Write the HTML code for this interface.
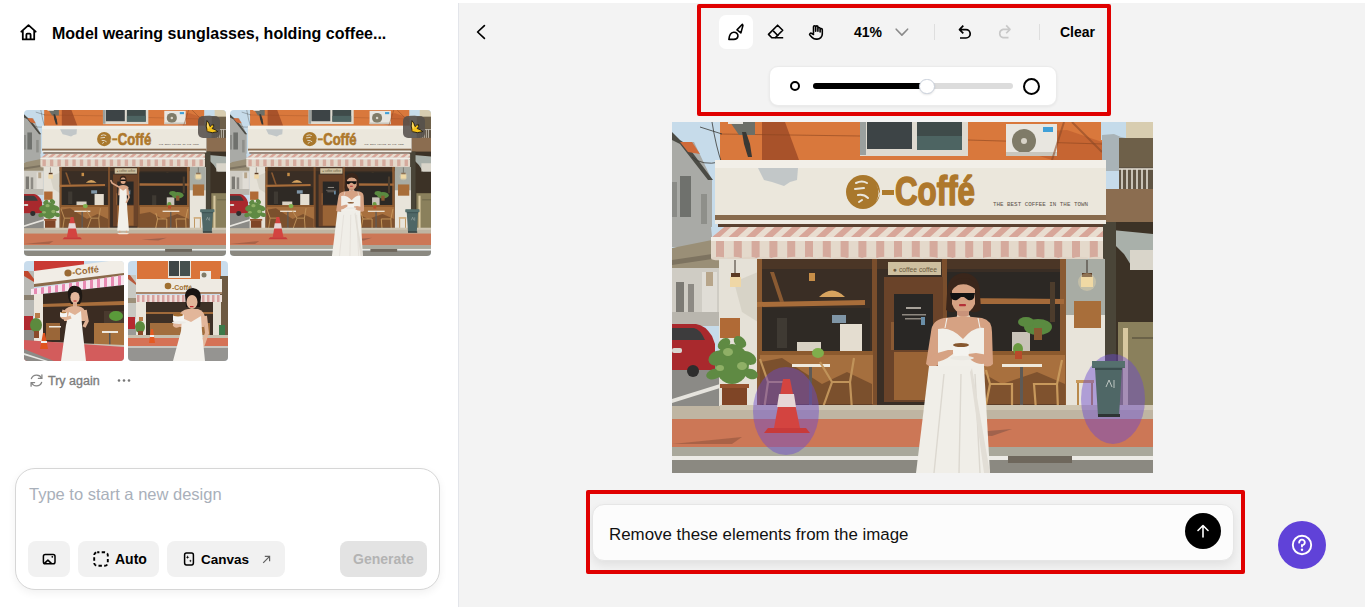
<!DOCTYPE html>
<html><head><meta charset="utf-8">
<style>
*{box-sizing:border-box;margin:0;padding:0}
html,body{width:1365px;height:607px;overflow:hidden;background:#fff;font-family:"Liberation Sans",sans-serif;color:#000}
.abs{position:absolute}
#left{position:absolute;left:0;top:0;width:458px;height:607px;background:#fff}
#divider{position:absolute;left:458px;top:3px;width:1px;height:604px;background:#e3e5ea}
#right{position:absolute;left:459px;top:3px;width:906px;height:604px;background:#f3f3f3}
.title{position:absolute;left:52px;top:23.5px;font-size:16px;font-weight:bold;line-height:20px;white-space:nowrap;color:#000}
.thumb{position:absolute;border-radius:4px;overflow:hidden}
.thumb>svg:first-child{display:block}
.badge{position:absolute;width:23px;height:22px;border-radius:5px;background:rgba(90,90,90,0.55)}
.try{position:absolute;left:48px;top:373px;font-size:12.5px;line-height:16px;color:#7d7d7d;-webkit-text-stroke:0.35px #7d7d7d}
.box{position:absolute;left:15px;top:468px;width:425px;height:122px;border:1px solid #d6d6d6;border-radius:20px;background:#fff;box-shadow:0 3px 8px rgba(0,0,0,0.06)}
.ph{position:absolute;left:13px;top:14.5px;font-size:16.5px;line-height:20px;color:#a9b0ba;white-space:nowrap}
.btn{position:absolute;top:72px;height:36px;border-radius:8px;background:#f1f1f1}
.btxt{position:absolute;top:10px;font-size:14px;font-weight:bold;line-height:17px;white-space:nowrap}
.redbox{position:absolute;border:4px solid #e00000;border-radius:2px}
</style></head><body><svg width="0" height="0" style="position:absolute"><defs><g id="scene"><!-- sky -->
<rect x="0" y="0" width="481" height="351" fill="#c6dbea"/>
<!-- left house -->
<polygon points="0,14 8,20 22,20 40,58 40,125 0,125" fill="#a9aaa6"/>
<polygon points="0,10 0,18 8,22 36,58 41,58 14,22 8,18" fill="#4b4b45"/>
<polygon points="8,20 20,20 28,32 16,30" fill="#cf6a3a"/>
<rect x="8" y="54" width="11" height="41" fill="#6f716d"/>
<rect x="0" y="60" width="5" height="35" fill="#8a8b87"/>
<rect x="29" y="72" width="6" height="30" fill="#8e8f8a"/>
<!-- left canopy -->
<polygon points="0,126 40,118 47,120 47,147 0,150" fill="#9a8f77"/>
<polygon points="0,138 47,131 47,136 0,143" fill="#7d7360"/>
<!-- lower left building -->
<rect x="0" y="146" width="47" height="58" fill="#cfccc4"/>
<rect x="4" y="160" width="8" height="40" fill="#7c7a74"/>
<rect x="16" y="162" width="6" height="38" fill="#8d8a84"/>
<rect x="30" y="150" width="15" height="50" fill="#e0ddd6"/>
<rect x="34" y="150" width="7" height="14" fill="#b7a58a"/>
<rect x="0" y="190" width="47" height="14" fill="#b9b6ae"/>
<!-- street left -->
<rect x="0" y="248" width="48" height="40" fill="#8b8a86"/>
<polygon points="0,277 48,262 48,266 0,281" fill="#e6e4de"/>
<!-- red car -->
<path d="M0 202 H24 Q33 203 40 214 L43 222 V248 H0 Z" fill="#a9292d"/>
<path d="M0 206 H22 Q28 207 33 218 H0 Z" fill="#3d3c3d"/>
<rect x="0" y="226" width="10" height="5" rx="2" fill="#d8d8d2"/>
<circle cx="21" cy="249" r="6" fill="#2d2d2d"/>
<!-- orange wall -->
<rect x="48" y="0" width="383" height="39" fill="#d9783c"/>
<polygon points="90,0 113,0 127,38 90,38" fill="#a8522a"/>
<polygon points="360,10 395,8 430,20 430,38 380,38 355,30" fill="#b9592c" opacity="0.6"/>
<path d="M48 12 L188 14 M296 18 L431 22" stroke="#8a4420" stroke-width="0.6" fill="none"/>
<!-- AC left -->
<polygon points="58,0 83,0 83,13 67,13" fill="#6c6f68"/><rect x="56" y="0" width="15" height="2" fill="#e8e6e0"/>
<polygon points="70,10 74,10 78,22 80,35 76,35 72,22" fill="#3a3834"/>
<!-- window -->
<rect x="188" y="0" width="108" height="34" fill="#dedad0"/>
<rect x="195" y="0" width="45" height="27" fill="#3d4446"/>
<rect x="245" y="0" width="45" height="28" fill="#3f4b4a"/>
<rect x="245" y="14" width="45" height="14" fill="#4d6462"/>
<rect x="188" y="0" width="6" height="33" fill="#9aa09e"/>
<!-- AC right -->
<rect x="334" y="2" width="51" height="32" fill="#e8e6e0"/>
<circle cx="352" cy="19" r="12" fill="#7f7b68"/>
<circle cx="352" cy="19" r="3" fill="#d8d4c8"/>
<rect x="371" y="5" width="10" height="5" fill="#3fa0d8"/>
<rect x="334" y="30" width="51" height="4" fill="#c9c6bd"/>
<!-- poles / wires -->
<path d="M392 0 L380 38 M400 0 L430 30" stroke="#8c4a26" stroke-width="2" fill="none" opacity="0.6"/>
<path d="M28 5 L50 12 M40 0 Q44 25 50 42 M20 35 Q30 44 48 40" stroke="#3a3a36" stroke-width="0.8" fill="none"/>
<!-- right buildings -->
<rect x="429" y="0" width="52" height="18" fill="#c5dbea"/>
<rect x="454" y="0" width="27" height="18" fill="#d8cdb0"/>
<polygon points="430,13 442,12 449,15 454,16 454,49 430,49" fill="#a9b3b7"/>
<rect x="447" y="16" width="34" height="30" fill="#6e6049"/>
<rect x="447" y="45" width="34" height="24" fill="#5f5444"/>
<path d="M450 47 V68 M455 47 V68 M460 47 V68 M465 47 V68 M470 47 V68 M475 47 V68 M447 47 H481" stroke="#e2ddd2" stroke-width="1.6"/>
<rect x="434" y="67" width="47" height="48" fill="#8b6d50"/>
<rect x="429" y="100" width="52" height="190" fill="#3c3226"/>
<polygon points="440,108 481,112 481,148 462,148 452,132 442,122" fill="#a9b0aa"/>
<rect x="458" y="128" width="23" height="20" fill="#d9d5ca"/>
<rect x="446" y="200" width="35" height="90" fill="#8a805c"/>
<rect x="451" y="206" width="5" height="84" fill="#d8c8a0"/>
<rect x="460" y="215" width="21" height="2" fill="#6a6248"/>
<rect x="431" y="100" width="13" height="190" fill="#4a4538"/>
<!-- sign band -->
<rect x="43" y="38" width="391" height="57" fill="#ebe7dc"/>
<rect x="43" y="38" width="391" height="8" fill="#f2efe8"/>
<polygon points="86,46 126,46 125,58 118,60 112,64 100,60 92,58" fill="#b4bcc2" opacity="0.75"/>
<rect x="43" y="93" width="391" height="5" fill="#876a4d"/>
<rect x="46" y="98" width="385" height="6" fill="#e8e4da"/>
<!-- logo + text -->
<circle cx="191" cy="70" r="17" fill="#a9782c"/>
<path d="M184 61 Q190 58 195 61 M183 67 L192 66 M186 73 Q192 72 196 76 M187 80 L190 78" stroke="#ebe7dc" stroke-width="2" fill="none" stroke-linecap="round"/><path d="M204 62 Q209 70 204 80 L208 72 Z" fill="#ebe7dc"/>
<rect x="210" y="68" width="12" height="5" fill="#ad7a2c"/>
<text x="223" y="83" font-family="Liberation Sans" font-weight="bold" font-size="40" fill="#ae782c" stroke="#ae782c" stroke-width="1.6" stroke-linejoin="round" textLength="80" lengthAdjust="spacingAndGlyphs">Coffé</text>
<text x="321" y="84" font-family="Liberation Mono" font-size="5.5" fill="#5b524a" textLength="95" lengthAdjust="spacingAndGlyphs">THE BEST COFFEE IN THE TOWN</text>
<!-- awning --><clipPath id="awclip"><polygon points="52,105 431,105 431,115 40,115"/></clipPath>
<rect x="43" y="98" width="391" height="4" fill="#efebe3"/>
<rect x="46" y="102" width="385" height="3" fill="#5a4030"/>
<polygon points="52,105 431,105 431,115 40,115" fill="#e9ddd0"/>
<path clip-path="url(#awclip)" d="M50.0 105 L59.0 105 L48.0 115 L39.0 115 Z M67.5 105 L76.5 105 L65.5 115 L56.5 115 Z M85.0 105 L94.0 105 L83.0 115 L74.0 115 Z M102.5 105 L111.5 105 L100.5 115 L91.5 115 Z M120.0 105 L129.0 105 L118.0 115 L109.0 115 Z M137.5 105 L146.5 105 L135.5 115 L126.5 115 Z M155.0 105 L164.0 105 L153.0 115 L144.0 115 Z M172.5 105 L181.5 105 L170.5 115 L161.5 115 Z M190.0 105 L199.0 105 L188.0 115 L179.0 115 Z M207.5 105 L216.5 105 L205.5 115 L196.5 115 Z M225.0 105 L234.0 105 L223.0 115 L214.0 115 Z M242.5 105 L251.5 105 L240.5 115 L231.5 115 Z M260.0 105 L269.0 105 L258.0 115 L249.0 115 Z M277.5 105 L286.5 105 L275.5 115 L266.5 115 Z M295.0 105 L304.0 105 L293.0 115 L284.0 115 Z M312.5 105 L321.5 105 L310.5 115 L301.5 115 Z M330.0 105 L339.0 105 L328.0 115 L319.0 115 Z M347.5 105 L356.5 105 L345.5 115 L336.5 115 Z M365.0 105 L374.0 105 L363.0 115 L354.0 115 Z M382.5 105 L391.5 105 L380.5 115 L371.5 115 Z M400.0 105 L409.0 105 L398.0 115 L389.0 115 Z M417.5 105 L426.5 105 L415.5 115 L406.5 115 Z M435.0 105 L444.0 105 L433.0 115 L424.0 115 Z" fill="#d8a699"/>
<polygon points="40,115 52,105 39,105" fill="#c6dbea"/>
<rect x="39" y="115" width="392" height="4" fill="#f2eee6"/>
<rect x="39" y="119" width="392" height="17" fill="#e4d9cb"/>
<g fill="#d5aa9d"><rect x="44.0" y="119" width="8" height="17"/><rect x="61.8" y="119" width="8" height="17"/><rect x="79.6" y="119" width="8" height="17"/><rect x="97.4" y="119" width="8" height="17"/><rect x="115.2" y="119" width="8" height="17"/><rect x="133.0" y="119" width="8" height="17"/><rect x="150.8" y="119" width="8" height="17"/><rect x="168.6" y="119" width="8" height="17"/><rect x="186.4" y="119" width="8" height="17"/><rect x="204.2" y="119" width="8" height="17"/><rect x="222.0" y="119" width="8" height="17"/><rect x="239.8" y="119" width="8" height="17"/><rect x="257.6" y="119" width="8" height="17"/><rect x="275.4" y="119" width="8" height="17"/><rect x="293.2" y="119" width="8" height="17"/><rect x="311.0" y="119" width="8" height="17"/><rect x="328.8" y="119" width="8" height="17"/><rect x="346.6" y="119" width="8" height="17"/><rect x="364.4" y="119" width="8" height="17"/><rect x="382.2" y="119" width="8" height="17"/><rect x="400.0" y="119" width="8" height="17"/><rect x="417.8" y="119" width="8" height="17"/></g>
<g fill="#e0d4c6"><ellipse cx="46.5" cy="136.5" rx="7.5" ry="1.8"/><ellipse cx="61.6" cy="136.5" rx="7.5" ry="1.8"/><ellipse cx="76.7" cy="136.5" rx="7.5" ry="1.8"/><ellipse cx="91.8" cy="136.5" rx="7.5" ry="1.8"/><ellipse cx="106.9" cy="136.5" rx="7.5" ry="1.8"/><ellipse cx="122.0" cy="136.5" rx="7.5" ry="1.8"/><ellipse cx="137.1" cy="136.5" rx="7.5" ry="1.8"/><ellipse cx="152.2" cy="136.5" rx="7.5" ry="1.8"/><ellipse cx="167.3" cy="136.5" rx="7.5" ry="1.8"/><ellipse cx="182.4" cy="136.5" rx="7.5" ry="1.8"/><ellipse cx="197.5" cy="136.5" rx="7.5" ry="1.8"/><ellipse cx="212.6" cy="136.5" rx="7.5" ry="1.8"/><ellipse cx="227.7" cy="136.5" rx="7.5" ry="1.8"/><ellipse cx="242.8" cy="136.5" rx="7.5" ry="1.8"/><ellipse cx="257.9" cy="136.5" rx="7.5" ry="1.8"/><ellipse cx="273.0" cy="136.5" rx="7.5" ry="1.8"/><ellipse cx="288.1" cy="136.5" rx="7.5" ry="1.8"/><ellipse cx="303.2" cy="136.5" rx="7.5" ry="1.8"/><ellipse cx="318.3" cy="136.5" rx="7.5" ry="1.8"/><ellipse cx="333.4" cy="136.5" rx="7.5" ry="1.8"/><ellipse cx="348.5" cy="136.5" rx="7.5" ry="1.8"/><ellipse cx="363.6" cy="136.5" rx="7.5" ry="1.8"/><ellipse cx="378.7" cy="136.5" rx="7.5" ry="1.8"/><ellipse cx="393.8" cy="136.5" rx="7.5" ry="1.8"/><ellipse cx="408.9" cy="136.5" rx="7.5" ry="1.8"/><ellipse cx="424.0" cy="136.5" rx="7.5" ry="1.8"/></g>
<!-- left pillar -->
<rect x="47" y="137" width="39" height="150" fill="#e5e1d7"/>
<polygon points="62,160 86,150 86,200 70,190" fill="#d2cdc1" opacity="0.7"/>
<path d="M63 138 V151" stroke="#3a3028" stroke-width="1"/>
<rect x="59" y="151" width="9" height="4" fill="#5a3a24"/>
<rect x="58" y="155" width="11" height="10" fill="#efd7a6"/>
<rect x="48" y="196" width="20" height="20" fill="#b06a36"/>
<!-- right pillar -->
<rect x="394" y="137" width="39" height="150" fill="#e8e4da"/>
<rect x="394" y="137" width="39" height="56" fill="#a8aca4"/>
<path d="M415 138 V151" stroke="#3a3028" stroke-width="1"/>
<rect x="410" y="151" width="10" height="4" fill="#5a3a24"/>
<circle cx="415" cy="160" r="9" fill="#f3dfae" opacity="0.35"/>
<rect x="409" y="155" width="12" height="10" fill="#f0d9a4"/>
<rect x="402" y="179" width="27" height="27" fill="#a86e3a"/>
<!-- storefront -->
<rect x="85" y="137" width="309" height="148" fill="#3a2e25"/>
<rect x="85" y="137" width="309" height="10" fill="#4b3626"/>
<rect x="85" y="137" width="5" height="148" fill="#8a5a32"/>
<rect x="200" y="137" width="5" height="148" fill="#7a4e2c"/>
<rect x="270" y="137" width="5" height="148" fill="#7a4e2c"/>
<rect x="388" y="137" width="6" height="148" fill="#8a5a32"/>
<rect x="137" y="151" width="6" height="8" fill="#c78e48"/>
<rect x="339" y="151" width="5" height="8" fill="#c78e48"/>
<!-- left window details -->
<polygon points="85,180 193,178 193,183 85,185" fill="#a86d3a"/>
<polygon points="98,150 108,180 112,180 102,150" fill="#8a5a32"/>
<rect x="90" y="186" width="108" height="44" fill="#2f2a25"/>
<path d="M147 175 Q160 162 173 175 Z" fill="#d6a35f"/>
<rect x="105" y="196" width="10" height="30" fill="#3f3a33"/>
<rect x="160" y="193" width="14" height="8" fill="#7f95a6"/>
<rect x="168" y="202" width="22" height="27" fill="#e4ddd0"/>
<rect x="125" y="220" width="24" height="10" fill="#d8d1c4"/>
<!-- door -->
<rect x="212" y="155" width="59" height="125" fill="#6a4329"/>
<rect x="222" y="172" width="39" height="56" fill="#292725"/>
<rect x="234" y="185" width="15" height="2" fill="#a8a29a"/>
<rect x="230" y="192" width="24" height="1.5" fill="#8e8880"/>
<rect x="233" y="196" width="20" height="1.5" fill="#8e8880"/><rect x="249" y="195" width="4" height="8" fill="#6a8ea8"/>
<rect x="219" y="200" width="3" height="28" fill="#8a5a34"/>
<rect x="216" y="140" width="53" height="13" fill="#cdbf9f"/>
<text x="221" y="150" font-family="Liberation Sans" font-size="6.5" fill="#6a5a40" textLength="44" lengthAdjust="spacingAndGlyphs">● coffee coffee</text>
<rect x="222" y="230" width="39" height="48" fill="#9a6436"/>
<!-- right window -->
<rect x="275" y="150" width="113" height="80" fill="#2c2824"/>
<polygon points="275,176 392,177 392,182 275,182" fill="#a46a3a"/>
<rect x="340" y="210" width="18" height="20" fill="#c9c3b8"/>
<rect x="305" y="205" width="10" height="25" fill="#3f3a33"/>
<rect x="378" y="160" width="5" height="40" fill="#4c3c2c"/>
<!-- counters -->
<rect x="88" y="229" width="113" height="53" fill="#a56f3e"/>
<rect x="88" y="229" width="113" height="4" fill="#8c5a2e"/>
<polygon points="88,240 110,236 150,262 175,250 200,262 200,283 88,283" fill="#6e4628" opacity="0.75"/>
<rect x="275" y="229" width="118" height="53" fill="#a8703e"/>
<rect x="275" y="229" width="118" height="4" fill="#8c5a2e"/>
<polygon points="275,250 300,245 330,262 365,250 393,262 393,283 275,283" fill="#6e4628" opacity="0.7"/>
<!-- plants -->
<rect x="50" y="265" width="25" height="21" fill="#7f4526"/>
<rect x="48" y="262" width="29" height="4" fill="#96522e"/>
<g fill="#5f8a43">
<ellipse cx="60" cy="242" rx="17" ry="20"/><ellipse cx="45" cy="236" rx="9" ry="7" transform="rotate(-30 45 236)"/><ellipse cx="76" cy="236" rx="9" ry="6" transform="rotate(30 76 236)"/><ellipse cx="52" cy="222" rx="7" ry="5" transform="rotate(-40 52 222)"/><ellipse cx="68" cy="220" rx="7" ry="5" transform="rotate(40 68 220)"/><ellipse cx="42" cy="252" rx="8" ry="5" transform="rotate(-20 42 252)"/><ellipse cx="79" cy="252" rx="7" ry="5" transform="rotate(20 79 252)"/>
</g>
<g fill="#8fb066"><ellipse cx="56" cy="230" rx="5" ry="4"/><ellipse cx="70" cy="244" rx="5" ry="4"/><ellipse cx="48" cy="246" rx="4" ry="3"/></g>
<g fill="#5a8a40"><ellipse cx="366" cy="205" rx="14" ry="8"/><ellipse cx="354" cy="200" rx="8" ry="5"/></g>
<rect x="362" y="206" width="8" height="12" fill="#8a5a32"/>
<ellipse cx="146" cy="231" rx="6" ry="5" fill="#7fae4c"/>
<ellipse cx="346" cy="227" rx="5" ry="6" fill="#6a9a40"/>
<rect x="343" y="229" width="7" height="8" fill="#b84a2a"/>
<!-- tables & chairs -->
<rect x="120" y="242" width="38" height="3" fill="#efe9dc"/>
<rect x="137" y="245" width="3" height="40" fill="#5e5a56"/>
<rect x="129" y="284" width="19" height="2" fill="#5e5a56"/>
<path d="M88 237 L96 260 L92 288 M96 260 H114 L113 288 M148 240 L160 260 L150 288 M160 260 L178 260 L180 288 M178 260 L182 236" stroke="#c0935a" stroke-width="2.2" fill="none"/>
<rect x="330" y="242" width="40" height="3" fill="#efe9dc"/>
<rect x="348" y="245" width="3" height="42" fill="#5e5a56"/>
<rect x="338" y="286" width="22" height="2" fill="#5e5a56"/>
<path d="M314 248 L318 262 L313 288 M318 262 H340 L340 288 M390 238 L385 262 L386 288 M385 262 H362 L364 288" stroke="#c8995c" stroke-width="2.2" fill="none"/>
<rect x="404" y="258" width="18" height="3" fill="#c8995c"/>
<path d="M406 261 V288 M420 261 V288" stroke="#b8894c" stroke-width="2"/>
<!-- platform -->
<rect x="0" y="284" width="481" height="14" fill="#bfb5a2"/>
<rect x="48" y="283" width="433" height="5" fill="#cec5b1"/>
<!-- sidewalk -->
<rect x="0" y="297" width="481" height="29" fill="#cc7756"/>
<polygon points="0,322 40,318 70,315 60,322" fill="#9a5a42" opacity="0.7"/>
<polygon points="280,312 340,307 320,314" fill="#8e5a48" opacity="0.7"/>
<!-- curb / street -->
<rect x="0" y="325" width="481" height="10" fill="#a9a89b"/>
<rect x="0" y="334" width="481" height="4" fill="#ecebe6"/>
<rect x="0" y="338" width="481" height="13" fill="#8b8981"/>
<rect x="336" y="334" width="64" height="7" fill="#6e675c"/>
</g><g id="objs"><!-- trash bin -->
<polygon points="420,239 453,239 453,246 450,246 447,294 426,294 423,246 420,246" fill="#4f6766"/>
<rect x="420" y="239" width="33" height="6" fill="#55706e"/>
<rect x="423" y="246" width="27" height="2" fill="#3a4e4e"/>
<path d="M434 265 L437 258 L440 265 M442 258 V266" stroke="#c8d0cc" stroke-width="0.9" fill="none"/>
<rect x="426" y="292" width="22" height="3" fill="#2e3434"/>
<!-- traffic cone -->
<polygon points="111,257 118,257 128,306 102,306" fill="#d34440"/>
<polygon points="107,272 122,272 124,285 105,285" fill="#e6d6d6"/>
<polygon points="96,306 134,306 138,311 92,311" fill="#c83a3a"/>
</g><g id="woman"><!-- woman -->
<path d="M275 172 Q275 152 292 151 Q308 152 308 172 L309 188 Q302 192 298 189 L285 189 Q279 192 274 188 Z" fill="#3a261b"/>
<path d="M280 166 Q291 156 303 166 L303 182 Q299 191 291 192 Q283 191 280 182 Z" fill="#d6a283"/>
<path d="M278 162 Q292 150 306 162 L304 168 Q296 160 286 163 Q282 165 279 170 Z" fill="#3a261b"/>
<path d="M278 171 H303 L302 176 Q300 179 296 178 L292 175 H289 L285 178 Q281 179 279 176 Z" fill="#121212"/>
<rect x="287" y="182" width="7" height="2.3" rx="1" fill="#b43038"/>
<rect x="285" y="189" width="12" height="8" fill="#c9937a"/>
<path d="M285 194 Q291 197.5 298 194" stroke="#efe8d6" stroke-width="1.6" fill="none"/>
<path d="M259 210 Q260 198 272 196 L291 194 L310 196 Q320 198 320 210 L321 242 Q316 248 305 240 L290 234 L272 240 Q260 248 254 242 Z" fill="#d6a283"/>
<path d="M266 207 Q279 204 291 217 Q302 204 312 206 L312 246 H266 Z" fill="#f1efe9"/><path d="M273 206 L275 196 M308 206 L306 196" stroke="#f1efe9" stroke-width="1.1"/>
<path d="M255 238 Q266 244 281 232 L284 228 L276 228 L262 232 Z" fill="#d6a283"/>
<path d="M320 238 Q310 246 299 238 L296 232 L304 231 L316 233 Z" fill="#d6a283"/>
<path d="M281 222 H297 V231 Q297 235 289 235 Q281 235 281 231 Z" fill="#f4f3ef"/>
<ellipse cx="289" cy="223" rx="8" ry="2" fill="#86572f"/>
<ellipse cx="290" cy="236" rx="12" ry="2.2" fill="#ebe9e3"/>
<path d="M257 244 H312 L318 351 H244 Z" fill="#f0eee8"/>
<path d="M272 252 L262 351 M289 252 L287 351 M303 252 L308 351" stroke="#dcd8d0" stroke-width="1.4" fill="none"/>
<path d="M300 246 L318 351 H312 L298 250 Z" fill="#e2ded6"/>
</g><g id="wsmall"><path d="M228 168 Q228 158 236 158 Q244 158 244 168 L244 178 L228 178 Z" fill="#3a261b"/>
<ellipse cx="236" cy="170" rx="6" ry="8" fill="#d9a687"/>
<rect x="229" y="167" width="14" height="3.5" rx="1.5" fill="#141414"/>
<path d="M226 183 Q236 178 246 183 L248 205 H224 Z" fill="#d9a687"/>
<path d="M228 188 L236 194 L244 188 L246 240 L250 290 H222 L226 240 Z" fill="#f2f0ea"/>
<path d="M226 185 L210 176 L207 170" stroke="#d9a687" stroke-width="4" fill="none" stroke-linecap="round"/>
<path d="M246 186 L250 210 L244 222" stroke="#d9a687" stroke-width="4" fill="none" stroke-linecap="round"/>
<path d="M228 290 L228 296 M244 290 L244 296" stroke="#d9a687" stroke-width="3"/>
<ellipse cx="236" cy="297" rx="14" ry="2" fill="#efe8de"/>
</g></defs></svg>
<div id="left">
  <!-- home icon -->
  <svg class="abs" style="left:18.5px;top:22.5px" width="19" height="19" viewBox="0 0 18 18">
    <path d="M2.2 8.2 L9 2 L15.8 8.2 M3.6 7 V15.6 H14.4 V7 M7 15.6 V11.2 Q7 10 8 10 H10 Q11 10 11 11.2 V15.6" fill="none" stroke="#000" stroke-width="1.7" stroke-linejoin="round" stroke-linecap="round"/>
  </svg>
  <div class="title">Model wearing sunglasses, holding coffee...</div>

  <div class="thumb" id="t1" style="left:24px;top:110px;width:202px;height:146px"><svg width="202" height="146" viewBox="0 0 481 351" preserveAspectRatio="none" style="display:block"><use href="#scene"/><use href="#objs"/><use href="#wsmall"/></svg><svg class="abs" style="right:6px;top:6px" width="22" height="22" viewBox="0 0 22 22"><rect width="22" height="22" rx="5" fill="#55504b" fill-opacity="0.88"/><path d="M9 4.6 Q7.2 10 9.3 15.6 Q14 17.8 19.8 15.6 Q17.2 13.2 14.2 12.6 Q16.4 10.4 15.6 8.6 Q13.2 8.8 12.1 10.6 Q11.2 7 9 4.6 Z" fill="#f4c21a" stroke="#1e1a14" stroke-width="0.9" stroke-linejoin="round"/><path d="M9.4 5.8 Q8.6 10 10.2 13.6 Q11.4 9.6 9.4 5.8 Z" fill="#f9e08a"/><path d="M9.6 15.4 Q8.8 14 9.8 13" stroke="#c88a10" stroke-width="0.8" fill="none"/></svg></div><!--/t1-->
  <div class="thumb" id="t2" style="left:230px;top:110px;width:201px;height:146px"><svg width="201" height="146" viewBox="0 0 481 351" preserveAspectRatio="none" style="display:block"><use href="#scene"/><use href="#objs"/><use href="#woman"/></svg><svg class="abs" style="right:6px;top:6px" width="22" height="22" viewBox="0 0 22 22"><rect width="22" height="22" rx="5" fill="#55504b" fill-opacity="0.88"/><path d="M9 4.6 Q7.2 10 9.3 15.6 Q14 17.8 19.8 15.6 Q17.2 13.2 14.2 12.6 Q16.4 10.4 15.6 8.6 Q13.2 8.8 12.1 10.6 Q11.2 7 9 4.6 Z" fill="#f4c21a" stroke="#1e1a14" stroke-width="0.9" stroke-linejoin="round"/><path d="M9.4 5.8 Q8.6 10 10.2 13.6 Q11.4 9.6 9.4 5.8 Z" fill="#f9e08a"/><path d="M9.6 15.4 Q8.8 14 9.8 13" stroke="#c88a10" stroke-width="0.8" fill="none"/></svg></div><!--/t2-->
  <div class="thumb" id="t3" style="left:24px;top:261px;width:100px;height:100px"><svg width="100" height="100" viewBox="0 0 100 100" style="display:block"><rect width="100" height="100" fill="#c9dcec"/>
<rect x="0" y="10" width="10" height="45" fill="#b8b8b4"/>
<polygon points="0,10 4,10 10,18 10,21 0,15" fill="#c0482e"/>
<rect x="0" y="34" width="10" height="5" fill="#8a8070"/>
<rect x="0" y="55" width="9" height="14" fill="#b02a30"/>
<rect x="0" y="69" width="10" height="12" fill="#8c8a86"/>
<polygon points="10,0 60,0 60,8 10,12" fill="#c93a34"/>
<polygon points="10,10 100,-2 100,14 10,25" fill="#f1ede6"/>
<polygon points="10,23 100,12 100,15 10,26" fill="#8a6a4a"/>
<text x="48" y="13" font-family="Liberation Sans" font-weight="bold" font-size="9" fill="#9a6a34" textLength="27" lengthAdjust="spacingAndGlyphs" transform="rotate(-7 60 10)">-Coffé</text>
<circle cx="44" cy="12" r="3.6" fill="#9a6a34"/>
<polygon points="7,28 100,14 100,24 7,34" fill="#f6e6ee"/>
<g fill="#e78ab2" clip-path="url(#t3aw)"><clipPath id="t3aw"><polygon points="7,28 100,14 100,24 7,34"/></clipPath>
<rect x="10" y="10" width="3" height="30"/><rect x="17" y="10" width="3" height="30"/><rect x="24" y="10" width="3" height="30"/><rect x="31" y="10" width="3" height="30"/><rect x="38" y="10" width="3" height="30"/><rect x="45" y="10" width="3" height="30"/><rect x="52" y="10" width="3" height="30"/><rect x="59" y="10" width="3" height="30"/><rect x="66" y="10" width="3" height="30"/><rect x="73" y="10" width="3" height="30"/><rect x="80" y="10" width="3" height="30"/><rect x="87" y="10" width="3" height="30"/><rect x="94" y="10" width="3" height="30"/></g>
<polygon points="18,33 100,24 100,88 18,82" fill="#3b2c22"/>
<polygon points="18,43 100,40 100,44 18,46" fill="#a86e3c"/>
<rect x="10" y="33" width="9" height="47" fill="#ece6dc"/>
<rect x="11" y="52" width="5" height="5" fill="#b87a48"/>
<rect x="70" y="62" width="30" height="24" fill="#a8723e"/><rect x="80" y="50" width="20" height="12" fill="#4a3a2e"/>
<rect x="22" y="62" width="14" height="17" fill="#9a6638"/>
<ellipse cx="12" cy="64" rx="6" ry="7" fill="#5c8a3e"/>
<rect x="10" y="70" width="5" height="7" fill="#8a4a2a"/>
<ellipse cx="92" cy="55" rx="7" ry="5" fill="#5a9a3a"/>
<rect x="78" y="70" width="16" height="2" fill="#eee8de"/>
<rect x="85" y="72" width="1.5" height="16" fill="#555"/>
<rect x="25" y="65" width="12" height="1.5" fill="#eee8de"/>
<polygon points="0,80 100,84 100,100 0,100" fill="#c9c2b4"/>
<polygon points="0,79 100,86 100,100 0,100" fill="#d35c5c"/>
<polygon points="0,88 30,100 0,100" fill="#8d8b87"/>
<polygon points="0,92 24,100 20,100 0,94" fill="#e8e8e4"/>
<polygon points="19,72 21,72 24,88 16,88" fill="#e0531e"/>
<rect x="17" y="80" width="6" height="2" fill="#f0f0f0"/>
<path d="M44 30 Q46 24 52 25 Q58 26 58 32 Q59 38 56 43 H47 Q43 37 44 30 Z" fill="#1e1814"/>
<ellipse cx="51" cy="36.5" rx="4.6" ry="6" fill="#e3b79c"/>
<path d="M45 29 Q51 25 57 30 L56 33 Q51 29 46 33 Z" fill="#1e1814"/>
<rect x="49.5" y="39.5" width="3" height="1" fill="#c02830"/>
<rect x="49" y="42" width="4" height="4" fill="#d9aa8e"/>
<path d="M40 50 Q43 45 51 45 Q59 45 61 50 L61 60 H40 Z" fill="#e0b294"/>
<path d="M61 49 L63 60 L60 66" stroke="#e0b294" stroke-width="3.5" fill="none"/>
<path d="M45 51 L51 54 L57 50 L58 64 L62 100 H37 L42 64 Z" fill="#f3f1ec"/>
<path d="M40 49 L38 56 Q40 59 47 56" stroke="#e0b294" stroke-width="3" fill="none"/>
<rect x="36" y="51" width="7" height="5" rx="1" fill="#f4f4f2"/>
<ellipse cx="39.5" cy="51.5" rx="3" ry="0.8" fill="#b07a40"/>
</svg></div><!--/t3-->
  <div class="thumb" id="t4" style="left:128px;top:261px;width:100px;height:100px"><svg width="100" height="100" viewBox="0 0 100 100" style="display:block"><rect width="100" height="100" fill="#c9dcec"/>
<rect x="0" y="14" width="8" height="44" fill="#c8c8c2"/>
<polygon points="0,14 2,14 8,22 8,24 0,18" fill="#b8583a"/>
<rect x="0" y="37" width="8" height="5" fill="#9c907a"/>
<rect x="0" y="56" width="7" height="12" fill="#b52a30"/>
<rect x="9" y="0" width="84" height="19" fill="#da743a"/>
<rect x="40" y="0" width="23" height="17" fill="#e6e2d8"/>
<rect x="41" y="0" width="10" height="15" fill="#3f4646"/>
<rect x="52" y="0" width="10" height="15" fill="#46504e"/>
<rect x="72" y="10" width="11" height="8" fill="#ecebe6"/>
<circle cx="76" cy="14" r="2.5" fill="#7f7b68"/>
<rect x="92" y="15" width="8" height="60" fill="#6e5a42"/>
<rect x="8" y="18" width="86" height="13" fill="#eeeae2"/>
<rect x="8" y="31" width="86" height="2" fill="#a8866a"/>
<circle cx="40" cy="25" r="3.3" fill="#a07030"/>
<text x="44" y="29" font-family="Liberation Sans" font-weight="bold" font-size="8" fill="#a07030" textLength="20" lengthAdjust="spacingAndGlyphs">-Coffé</text>
<rect x="8" y="34" width="86" height="7" fill="#eee0da"/>
<g fill="#d7a2a0"><rect x="9" y="34" width="2.5" height="7"/><rect x="14" y="34" width="2.5" height="7"/><rect x="19" y="34" width="2.5" height="7"/><rect x="24" y="34" width="2.5" height="7"/><rect x="29" y="34" width="2.5" height="7"/><rect x="34" y="34" width="2.5" height="7"/><rect x="39" y="34" width="2.5" height="7"/><rect x="44" y="34" width="2.5" height="7"/><rect x="49" y="34" width="2.5" height="7"/><rect x="54" y="34" width="2.5" height="7"/><rect x="59" y="34" width="2.5" height="7"/><rect x="64" y="34" width="2.5" height="7"/><rect x="69" y="34" width="2.5" height="7"/><rect x="74" y="34" width="2.5" height="7"/><rect x="79" y="34" width="2.5" height="7"/><rect x="84" y="34" width="2.5" height="7"/><rect x="89" y="34" width="2.5" height="7"/></g>
<rect x="8" y="41" width="10" height="34" fill="#ebe6dc"/>
<rect x="85" y="41" width="8" height="34" fill="#e6e0d4"/>
<rect x="18" y="41" width="67" height="34" fill="#3e3026"/>
<rect x="18" y="51" width="67" height="2" fill="#a06a3a"/>
<rect x="22" y="62" width="60" height="13" fill="#a26e3e"/>
<rect x="11" y="56" width="4" height="4" fill="#b87a48"/>
<ellipse cx="12" cy="66" rx="5" ry="6" fill="#5c8a3e"/>
<rect x="10" y="70" width="5" height="6" fill="#8a4a2a"/>
<rect x="91" y="64" width="6" height="13" fill="#3c7a4a"/>
<rect x="0" y="68" width="8" height="14" fill="#9a9a96"/>
<rect x="0" y="74" width="100" height="4" fill="#c7bfae"/>
<rect x="0" y="77" width="100" height="8" fill="#d57256"/>
<rect x="0" y="85" width="100" height="2" fill="#c8c6c0"/>
<rect x="0" y="87" width="100" height="13" fill="#959491"/>
<polygon points="23,68 25,68 27,82 21,82" fill="#e45a22"/>
<rect x="22" y="74" width="4" height="2" fill="#f0f0f0"/>
<path d="M57 34 Q58 27 65 27 Q73 28 73 36 L72 46 H58 Z" fill="#1a1412"/>
<ellipse cx="64" cy="41" rx="5.5" ry="7" fill="#e2b69a"/>
<rect x="62" y="45" width="3.5" height="1.2" fill="#c02830"/>
<path d="M51 55 Q53 49 60 48 H70 Q76 50 77 56 L76 66 H52 Z" fill="#e2b69a"/>
<path d="M77 55 L79 72 L74 86" stroke="#e2b69a" stroke-width="4" fill="none"/>
<path d="M49 56 L47 64 Q49 66 54 62" stroke="#e2b69a" stroke-width="4" fill="none"/>
<path d="M54 57 L63 61 L73 55 L74 70 L77 100 H45 L53 70 Z" fill="#f3f1ec"/>
<rect x="45" y="53" width="11" height="8" rx="2" fill="#f4f4f2"/>
<ellipse cx="50" cy="54" rx="5" ry="1.4" fill="#a06a30"/>
<ellipse cx="51" cy="61.5" rx="7" ry="1.5" fill="#ecebe6"/>
</svg></div><!--/t4-->

  <!-- try again -->
  <svg class="abs" style="left:29px;top:373px" width="15" height="15" viewBox="0 0 15 15">
    <path d="M12.6 5.2 A5.6 5.6 0 0 0 2.4 5.6 M2.4 9.8 A5.6 5.6 0 0 0 12.6 9.4" fill="none" stroke="#858585" stroke-width="1.3" stroke-linecap="round"/>
    <path d="M12.9 1.8 V5.4 H9.4" fill="none" stroke="#858585" stroke-width="1.3" stroke-linecap="round" stroke-linejoin="round"/>
    <path d="M2.1 13.2 V9.6 H5.6" fill="none" stroke="#858585" stroke-width="1.3" stroke-linecap="round" stroke-linejoin="round"/>
  </svg>
  <div class="try">Try again</div>
  <svg class="abs" style="left:117px;top:378px" width="14" height="5" viewBox="0 0 14 5">
    <circle cx="2" cy="2.5" r="1.3" fill="#777"/><circle cx="7" cy="2.5" r="1.3" fill="#777"/><circle cx="12" cy="2.5" r="1.3" fill="#777"/>
  </svg>

  <div class="box">
    <div class="ph">Type to start a new design</div>
    <div class="btn" style="left:12px;width:42px">
      <svg class="abs" style="left:13px;top:10px" width="16" height="15" viewBox="0 0 16 15">
        <rect x="2.4" y="3.6" width="11.6" height="9.2" rx="1.8" fill="none" stroke="#000" stroke-width="1.5"/>
        <path d="M3.2 12.6 L6.9 9.1 L10.6 12.6" fill="none" stroke="#000" stroke-width="1.5" stroke-linejoin="round"/>
        <circle cx="11.3" cy="5.8" r="0.9" fill="#000"/>
      </svg>
    </div>
    <div class="btn" style="left:62px;width:81px">
      <svg class="abs" style="left:15px;top:10px" width="16" height="16" viewBox="0 0 16 16">
        <rect x="1.2" y="1.2" width="13.6" height="13.6" rx="3" fill="none" stroke="#000" stroke-width="1.9" stroke-dasharray="3.4 2.3" stroke-dashoffset="1.2"/>
      </svg>
      <div class="btxt" style="left:37px">Auto</div>
    </div>
    <div class="btn" style="left:151px;width:118px">
      <svg class="abs" style="left:15.5px;top:11px" width="12" height="14" viewBox="0 0 12 14">
        <rect x="1.6" y="1.1" width="8.8" height="11.8" rx="1.8" fill="none" stroke="#000" stroke-width="1.5"/>
        <path d="M4.6 3.3 L5.1 4.7 L6.5 5.2 L5.1 5.7 L4.6 7.1 L4.1 5.7 L2.7 5.2 L4.1 4.7 Z M7.4 7.4 L7.8 8.5 L8.9 8.9 L7.8 9.3 L7.4 10.4 L7 9.3 L5.9 8.9 L7 8.5 Z" fill="#000"/>
      </svg>
      <div class="btxt" style="left:34px;font-size:13.5px">Canvas</div>
      <svg class="abs" style="left:95px;top:14px" width="9" height="9" viewBox="0 0 9 9">
        <path d="M1.2 7.8 L7.6 1.4 M2.8 1.4 H7.6 V6.2" fill="none" stroke="#606060" stroke-width="1.2"/>
      </svg>
    </div>
    <div class="btn" style="left:324px;width:87px;background:#e3e3e3">
      <div class="btxt" style="left:13px;color:#b3b3b3;font-size:14px">Generate</div>
    </div>
  </div>
</div>
<div id="divider"></div>
<div id="right"></div>

<!-- back chevron -->
<svg class="abs" style="left:474px;top:23px" width="14" height="18" viewBox="0 0 14 18">
  <path d="M10.4 2.6 L3.6 9 L10.4 15.4" fill="none" stroke="#000" stroke-width="1.7" stroke-linecap="round" stroke-linejoin="round"/>
</svg>

<!-- toolbar -->
<div class="abs" style="left:719px;top:15px;width:34px;height:34px;border-radius:7px;background:#fff"></div>
<div class="abs" style="left:854px;top:24px;font-size:14px;font-weight:bold;line-height:17px">41%</div>
<div class="abs" style="left:1060px;top:24px;font-size:14px;font-weight:bold;line-height:17px">Clear</div>
<div class="abs" style="left:934px;top:24px;width:1px;height:16px;background:#dedede"></div>
<div class="abs" style="left:1039px;top:24px;width:1px;height:16px;background:#dedede"></div>

<!-- toolbar icons -->
<svg class="abs" style="left:726px;top:22px" width="20" height="20" viewBox="0 0 20 20">
  <path d="M2.9 17.4 C3.2 13.6 5 10.6 7.6 10.3 C10.2 10.1 12.3 11.8 11.9 14.3 C11.5 16.6 9.6 17.4 7.8 17.4 Z" fill="none" stroke="#000" stroke-width="1.6" stroke-linejoin="round"/>
  <path d="M11 7.9 L16.4 2.3 L16.9 3.6 L14.9 10.9 Z" fill="none" stroke="#000" stroke-width="1.6" stroke-linejoin="round"/>
</svg>
<svg class="abs" style="left:766px;top:22px" width="20" height="20" viewBox="0 0 20 20">
  <path d="M2.5 12.4 L11.6 3.2 L16.7 8.2 L9.2 15.7 H5.8 Z" fill="none" stroke="#000" stroke-width="1.6" stroke-linejoin="round"/>
  <path d="M9.2 15.7 H17.2 M7.2 8.9 L12.3 14" fill="none" stroke="#000" stroke-width="1.6" stroke-linecap="butt"/>
</svg>
<svg class="abs" style="left:807.5px;top:23.5px" width="16.5" height="16.5" viewBox="0 0 24 24">
  <path d="M17.6 11.5V6.6a1.6 1.6 0 0 0-3.2 0 M14.4 10.5V4.3a1.6 1.6 0 0 0-3.2 0v1.5 M11.2 10.5V4.1a1.6 1.6 0 0 0-3.2 0v9.4 M17.6 8.2a1.6 1.6 0 1 1 3.2 0v6.3a7.5 7.5 0 0 1-7.5 7.5h-1.4c-2.6 0-4.2-.8-5.6-2.2l-3.4-3.4a1.8 1.8 0 0 1 2.6-2.5L8 15.3" fill="none" stroke="#000" stroke-width="2.3" stroke-linecap="round" stroke-linejoin="round"/>
</svg>
<svg class="abs" style="left:890px;top:22px" width="24" height="20" viewBox="0 0 24 20">
  <path d="M6.2 7.2 L11.9 13.1 L17.6 7.2" fill="none" stroke="#8a8a8a" stroke-width="1.6" stroke-linecap="round" stroke-linejoin="round"/>
</svg>
<svg class="abs" style="left:956px;top:22px" width="20" height="20" viewBox="0 0 20 20">
  <path d="M7.3 3.6 L3.5 7.6 L7.3 11.4 M3.8 7.6 H10 A4.2 4.2 0 0 1 10 16 H4" fill="none" stroke="#000" stroke-width="1.7" stroke-linecap="butt" stroke-linejoin="round"/>
</svg>
<svg class="abs" style="left:994px;top:22px" width="20" height="20" viewBox="0 0 20 20">
  <path d="M12.2 3.4 L16 7.4 L12.2 11.2 M15.7 7.4 H9 A4.2 4.2 0 0 0 9 15.6 H14.5" fill="none" stroke="#c8c8c8" stroke-width="1.6" stroke-linecap="butt" stroke-linejoin="round"/>
</svg>
<!-- slider panel -->
<div class="abs" style="left:769px;top:66px;width:288px;height:40px;border-radius:9px;background:#fff;border:1px solid #ebebeb;box-shadow:0 1px 3px rgba(0,0,0,0.06)"></div>
<div class="abs" style="left:790px;top:81px;width:10px;height:10px;border-radius:50%;border:2px solid #000"></div>
<div class="abs" style="left:813px;top:83px;width:200px;height:6px;border-radius:3px;background:#dcdcdc"></div>
<div class="abs" style="left:813px;top:83px;width:114px;height:6px;border-radius:3px;background:#000"></div>
<div class="abs" style="left:919px;top:78.5px;width:15.5px;height:15.5px;border-radius:50%;background:#fff;border:1px solid #c9d0db;box-shadow:0 1px 2px rgba(0,0,0,0.1)"></div>
<div class="abs" style="left:1022.5px;top:77.5px;width:17px;height:17px;border-radius:50%;border:2px solid #000"></div>

<!-- main image -->
<div class="abs" id="main" style="left:672px;top:122px;width:481px;height:351px;overflow:hidden"><svg width="481" height="351" viewBox="0 0 481 351" style="display:block"><use href="#scene"/><ellipse cx="114" cy="289" rx="33" ry="44" fill="#6a4ad0" opacity="0.45"/>
<ellipse cx="441" cy="277" rx="32" ry="45" fill="#6a4ad0" opacity="0.45"/><use href="#objs"/><use href="#woman"/></svg></div><!--/main-->

<!-- prompt bar -->
<div class="abs" style="left:592px;top:504px;width:642px;height:57px;border-radius:12px;background:#fcfcfc;border:1px solid #e6e6e6;box-shadow:0 4px 10px rgba(0,0,0,0.08)"></div>
<div class="abs" style="left:609px;top:524.5px;font-size:16.9px;line-height:20px;color:#111;white-space:nowrap">Remove these elements from the image</div>
<div class="abs" style="left:1185px;top:513px;width:36px;height:36px;border-radius:50%;background:#000"></div>
<svg class="abs" style="left:1193px;top:521px" width="20" height="20" viewBox="0 0 20 20">
  <path d="M10 16 V4.5 M5 9.5 L10 4.5 L15 9.5" fill="none" stroke="#fff" stroke-width="1.6" stroke-linecap="round" stroke-linejoin="round"/>
</svg>

<!-- help -->
<div class="abs" style="left:1278px;top:521px;width:48px;height:48px;border-radius:50%;background:#6042d8"></div>
<svg class="abs" style="left:1290px;top:533px" width="24" height="24" viewBox="0 0 24 24">
  <circle cx="12" cy="12" r="9.2" fill="none" stroke="#fff" stroke-width="1.9"/>
  <path d="M9.2 9.6 A2.8 2.8 0 1 1 12 12.2 V13.6" fill="none" stroke="#fff" stroke-width="1.9" stroke-linecap="round"/>
  <circle cx="12" cy="16.8" r="1.2" fill="#fff"/>
</svg>

<!-- red annotation boxes -->
<div class="redbox" style="left:697px;top:4px;width:414px;height:112px"></div>
<div class="redbox" style="left:586px;top:490px;width:659px;height:84px"></div>
</body></html>
